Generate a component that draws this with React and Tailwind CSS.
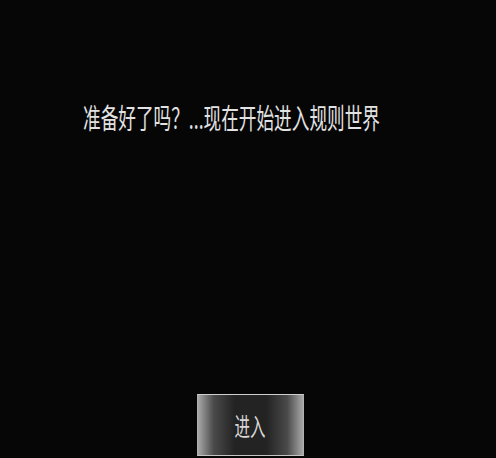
import React from "react";

function App() {
  return (
    <div className="w-[496px] h-[458px] bg-[#060606] flex flex-col overflow-hidden font-['Noto_Sans_CJK_SC',sans-serif]">
      <p className="mt-[103px] ml-[83px] text-[28px] leading-[28px] text-[#e2e2e2] whitespace-nowrap origin-left scale-x-[0.63]">
        准备好了吗？...现在开始进入规则世界
      </p>

      <div className="mt-auto mb-[2px] ml-[197px] w-[107px] h-[62px] border border-[#b0b0b0] border-t-[#cfcfcf] border-b-[#c4c4c4] bg-[linear-gradient(to_right,#a8a8a8,#4a4a4a_15%,#232323_35%,#232323_65%,#4a4a4a_85%,#a8a8a8)] flex items-center justify-center">
        <span className="text-[25px] leading-[25px] text-[#d8d8d8] scale-x-[0.62]">进入</span>
      </div>
    </div>
  );
}

export default App;
